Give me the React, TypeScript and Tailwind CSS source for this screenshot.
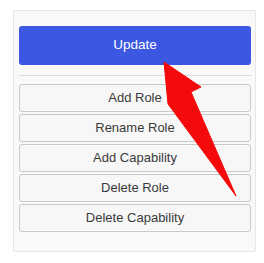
const actions = [
  "Add Role",
  "Rename Role",
  "Add Capability",
  "Delete Role",
  "Delete Capability",
];

export default function App() {
  return (
    <div
      className="relative h-[263px] w-[264px] bg-white"
      style={{ fontFamily: "'Liberation Sans', Arial, sans-serif" }}
    >
      <div className="ml-[13px] mt-[10px] flex h-[242px] w-[243px] flex-col rounded-[2px] border border-[#e6e6e6] bg-[#f9f9f9] pl-[5px] pr-[4px] pt-[15px]">
        <button className="flex h-[39px] w-[232px] items-center justify-center rounded-[3px] bg-[#3c58e3] text-[13.5px] text-white">
          Update
        </button>

        <div className="mt-[10px] h-px w-[232px] bg-[#dcdcdc]" />

        <div className="mt-[8px] flex flex-col gap-[2px]">
          {actions.map((label) => (
            <button
              key={label}
              className="flex h-[28px] w-[232px] items-center justify-center rounded-[3px] border border-[#c9c9c9] bg-[#f7f7f7] text-[13px] text-[#3a3a3a]"
            >
              {label}
            </button>
          ))}
        </div>
      </div>

      <svg
        className="pointer-events-none absolute left-0 top-0"
        width="264"
        height="263"
        viewBox="0 0 264 263"
      >
        <polygon
          points="164,52 201,77 191,82 236,186 168,94"
          fill="#f40a0a"
          stroke="#f40a0a"
          strokeWidth="1"
          strokeLinejoin="round"
        />
      </svg>
    </div>
  );
}
